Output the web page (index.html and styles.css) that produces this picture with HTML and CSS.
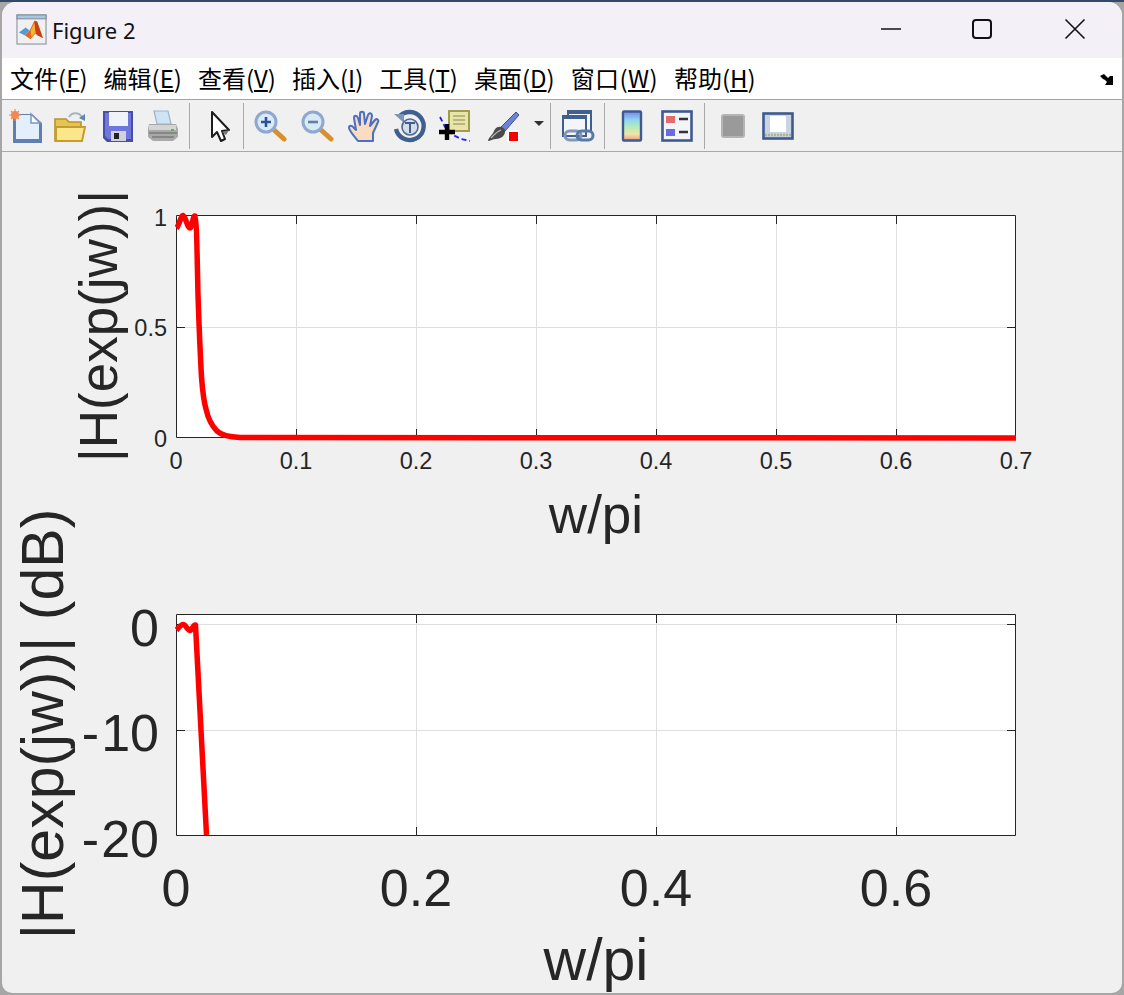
FILE: index.html
```html
<!DOCTYPE html>
<html lang="en">
<head>
    <meta charset="UTF-8">
    <title>Figure 2</title>
    <link rel="stylesheet" href="styles.css">
</head>
<body>
    <div class="window">
        <div class="titlebar">
            <svg class="app-icon" viewBox="0 0 32 32">
                <rect x="1" y="1" width="30" height="30" fill="#f0f0f0" stroke="#8f9aa3" stroke-width="1.2"/>
                <rect x="1" y="1" width="30" height="4" fill="#a9c6e0" stroke="#7c8a96" stroke-width="1"/>
                <path d="M3 19 L10 14 L14 17 L9 22 Z" fill="#4f9bd6"/>
                <path d="M9 22 L14 17 L19 7 L22 8 L20 20 L15 26 Z" fill="#e2661f"/>
                <path d="M19 7 L22 8 L28 25 L22 22 L20 20 Z" fill="#c8401a"/>
                <path d="M15 17 L19 9 L20 19 L16 24 Z" fill="#f6b32c"/>
            </svg>
            <span class="title">Figure 2</span>
            <div class="controls">
                <svg class="ctl ctl-min" viewBox="0 0 20 20"><path d="M0 10H20"/></svg>
                <svg class="ctl ctl-max" viewBox="0 0 20 20"><rect x="1" y="1" width="18" height="18" rx="3"/></svg>
                <svg class="ctl ctl-close" viewBox="0 0 20 20"><path d="M0.5 0.5L19.5 19.5M19.5 0.5L0.5 19.5"/></svg>
            </div>
        </div>

        <div class="menubar">
            <span class="menu-item">文件(<u>F</u>)</span>
            <span class="menu-item">编辑(<u>E</u>)</span>
            <span class="menu-item">查看(<u>V</u>)</span>
            <span class="menu-item">插入(<u>I</u>)</span>
            <span class="menu-item">工具(<u>T</u>)</span>
            <span class="menu-item">桌面(<u>D</u>)</span>
            <span class="menu-item wide">窗口(<u>W</u>)</span>
            <span class="menu-item">帮助(<u>H</u>)</span>
            <svg class="dock-arrow" viewBox="0 0 16 14"><path d="M1 3 L5 1 L9 5 L11 3 L14 3 L14 12 L6 12 L8 9 L6 7 L4 6 Z" fill="#000"/></svg>
        </div>

        <div class="toolbar">
            <!-- new -->
            <svg class="tool" viewBox="0 0 32 32">
                <path d="M3 4H22L32 13V33H3Z" fill="#5f7fb2"/>
                <path d="M6 5H21L29 13V29H6Z" fill="#e3effa"/>
                <path d="M21 4V13H30Z" fill="#ffffff" stroke="#7e97c0" stroke-width="1.5"/>
                <circle cx="5" cy="5" r="4" fill="#ee8a52"/>
                <path d="M5 -1V11M-1 5H11M1 1L9 9M9 1L1 9" stroke="#ee8a52" stroke-width="1.2"/>
            </svg>
            <!-- open -->
            <svg class="tool" viewBox="0 0 32 32">
                <path d="M1 9H12L15 12H27V31H1Z" fill="#e6c452" stroke="#b8922c" stroke-width="1.6"/>
                <path d="M2 17H31L28 31H2Z" fill="#fbe68a" stroke="#c49c30" stroke-width="2"/>
                <path d="M15 7C18 2 25 2 28 7" fill="none" stroke="#a3b3c6" stroke-width="2"/>
                <path d="M25 8L31 4V11Z" fill="#5f84ad"/>
            </svg>
            <!-- save -->
            <svg class="tool" viewBox="0 0 32 32">
                <path d="M1 1H31V32H5L1 28Z" fill="#464fa8"/>
                <path d="M3 3H29V29H6L3 26Z" fill="#7076dc"/>
                <rect x="7" y="2" width="19" height="14" fill="#f0f2fa"/>
                <rect x="9" y="21" width="15" height="10" fill="#d0d2e2"/>
                <rect x="12" y="23" width="5" height="6" fill="#222"/>
            </svg>
            <!-- print -->
            <svg class="tool" viewBox="0 0 32 32">
                <path d="M7 1H21L24 14H10Z" fill="#cfe3f6" stroke="#9fb3c8" stroke-width="1.2"/>
                <path d="M2 14H29L31 19V27L26 31H6L1 27V19Z" fill="#a9a9a9"/>
                <path d="M2 15H29V20H2Z" fill="#d4d4d4"/>
                <path d="M2 23H30M5 27H27" stroke="#7b7b7b" stroke-width="1.6"/>
                <rect x="24" y="19" width="3" height="2" fill="#5bb25b"/>
            </svg>
            <div class="sep"></div>
            <!-- pointer -->
            <svg class="tool" viewBox="0 0 32 32">
                <path d="M8 2V27L13 22L17 31L21 29L18 21L25 20Z" fill="#fff" stroke="#1c1c1c" stroke-width="2" stroke-linejoin="round"/>
                <path d="M18 22L25 20L22 25" fill="#777"/>
            </svg>
            <div class="sep"></div>
            <!-- zoom in -->
            <svg class="tool" viewBox="0 0 32 32">
                <path d="M19 19L30 29" stroke="#d98f2d" stroke-width="5" stroke-linecap="round"/>
                <circle cx="12" cy="12" r="10" fill="#d8eaf6" stroke="#8fa8d0" stroke-width="3"/>
                <path d="M7 12H17M12 7V17" stroke="#2f4f9f" stroke-width="2.6"/>
            </svg>
            <!-- zoom out -->
            <svg class="tool" viewBox="0 0 32 32">
                <path d="M19 19L30 29" stroke="#d98f2d" stroke-width="5" stroke-linecap="round"/>
                <circle cx="12" cy="12" r="10" fill="#d8eaf6" stroke="#8fa8d0" stroke-width="3"/>
                <path d="M7 12H17" stroke="#5f7fa9" stroke-width="2.6"/>
            </svg>
            <!-- pan -->
            <svg class="tool" viewBox="0 0 32 32">
                <path d="M10 31C7 27 2 22 1 18C1 15 4 15 6 18L8 20L6 8C6 5 9 5 10 8L12 15L12 4C12 1 16 1 16 4L17 14L20 5C21 2 24 3 24 6L22 16L27 10C29 8 31 10 30 12L25 23V31Z" fill="#fbdcc0" stroke="#4a6fc4" stroke-width="2" stroke-linejoin="round"/>
            </svg>
            <!-- rotate -->
            <svg class="tool" viewBox="0 0 32 32">
                <path d="M6 7A14 14 0 1 1 3 19" fill="none" stroke="#3f5f8f" stroke-width="4.4"/>
                <path d="M1 4H11V13Z" fill="#7f95b8"/>
                <circle cx="17" cy="17" r="8" fill="#d8dee8" stroke="#4c6a96" stroke-width="1.6"/>
                <path d="M12 13H22M17 13V23" stroke="#3f5f8f" stroke-width="2"/>
            </svg>
            <!-- data cursor -->
            <svg class="tool" viewBox="0 0 32 32">
                <rect x="10" y="1" width="20" height="20" fill="#e8e6a6" stroke="#a09c4c" stroke-width="2"/>
                <path d="M14 6H26M14 10H26M14 14H26" stroke="#a9a675" stroke-width="1.5"/>
                <path d="M1 7L6 17L14 25L22 29L31 31" fill="none" stroke="#2222ee" stroke-width="1.8" stroke-dasharray="5 3"/>
                <path d="M0 22H16M8 14V30" stroke="#000" stroke-width="4.4"/>
            </svg>
            <div class="brush-cell">
                <!-- brush -->
                <svg class="tool" viewBox="0 0 32 32">
                    <path d="M14 17L29 2L32 5L18 21Z" fill="#6b82d6" stroke="#40508f" stroke-width="1"/>
                    <path d="M1 31C2 26 6 25 7 21C9 16 15 15 18 20C19 25 14 29 9 29C6 29 3 31 1 31Z" fill="#4a4a4a"/>
                    <path d="M4 28C6 26 9 22 14 20" stroke="#b5b5b5" stroke-width="1.2" fill="none"/>
                    <rect x="20" y="20" width="12" height="12" fill="#fff"/>
                    <rect x="22" y="22" width="9" height="9" fill="#f50000"/>
                </svg>
                <span class="drop-arrow"></span>
            </div>
            <div class="sep"></div>
            <!-- link -->
            <svg class="tool" viewBox="0 0 32 32">
                <rect x="6" y="1" width="23" height="20" fill="#f3f5f8" stroke="#3f5f8f" stroke-width="2"/>
                <rect x="6" y="1" width="23" height="3" fill="#3f5f8f"/>
                <rect x="1" y="6" width="23" height="20" fill="#f3f5f8" stroke="#3f5f8f" stroke-width="2"/>
                <rect x="1" y="6" width="23" height="3" fill="#3f5f8f"/>
                <rect x="3" y="21" width="16" height="9" rx="4.500" fill="none" stroke="#8298b8" stroke-width="3"/>
                <rect x="15" y="21" width="16" height="9" rx="4.500" fill="none" stroke="#5a7aa6" stroke-width="3"/>
            </svg>
            <div class="sep"></div>
            <!-- colorbar -->
            <svg class="tool" viewBox="0 0 32 32">
                <defs>
                    <linearGradient id="cbar" x1="0" y1="0" x2="0" y2="1">
                        <stop offset="0" stop-color="#7a86ee"/>
                        <stop offset=".3" stop-color="#8ed8ee"/>
                        <stop offset=".55" stop-color="#b8ecb8"/>
                        <stop offset=".78" stop-color="#f0e6a8"/>
                        <stop offset="1" stop-color="#ee9a7c"/>
                    </linearGradient>
                </defs>
                <rect x="7" y="1.5" width="18" height="29" rx="1" fill="url(#cbar)" stroke="#3f5a90" stroke-width="2.4"/>
            </svg>
            <!-- legend -->
            <svg class="tool" viewBox="0 0 32 32">
                <rect x="1.5" y="1.5" width="29" height="29" fill="#f2f4f8" stroke="#3f5a90" stroke-width="2.6"/>
                <rect x="5" y="6" width="9" height="7" fill="#e66a6a"/>
                <rect x="5" y="19" width="9" height="7" fill="#6a6ae6"/>
                <path d="M18 9H27M18 22H27" stroke="#333" stroke-width="2.4"/>
            </svg>
            <div class="sep"></div>
            <!-- hide tools -->
            <svg class="tool" viewBox="0 0 32 32">
                <rect x="5" y="5" width="22" height="22" rx="2" fill="#9a9a9a" stroke="#b4b4b4" stroke-width="2"/>
            </svg>
            <!-- show tools -->
            <svg class="tool" viewBox="0 0 32 32">
                <rect x="1.5" y="3.5" width="29" height="25" fill="#c9d3e2" stroke="#3f5a90" stroke-width="2.6"/>
                <rect x="8" y="6" width="16" height="16" fill="#fff"/>
                <path d="M3 25H29" stroke="#b0b48a" stroke-width="2.500" stroke-dasharray="2 1"/>
            </svg>
        </div>

        <div class="figure">
            <svg class="plots" viewBox="2 152 1120 841">
                <!-- top axes -->
                <rect class="plot-bg" x="176.5" y="215.5" width="839" height="222"/>
                <path class="grid" d="M296.500 215.500V437.500M416.500 215.500V437.500M536.500 215.500V437.500M656.500 215.500V437.500M776.500 215.500V437.500M896.500 215.500V437.500M176.500 327.500H1015.500"/>
                <path class="axis" d="M176.500 215.500H1015.500V437.500H176.500Z"/>
                <path class="axis" d="M176.500 327.500H185M1015.500 327.500H1007M296.500 437.500V429M416.500 437.500V429M536.500 437.500V429M656.500 437.500V429M776.500 437.500V429M896.500 437.500V429M296.500 215.500V224M416.500 215.500V224M536.500 215.500V224M656.500 215.500V224M776.500 215.500V224M896.500 215.500V224"/>
                <path class="curve" d="M176.500 228 C179 226 181 215 183 215.500 C185.500 216 187.500 228 190 228 C192 228 193 215 195 216 C196.500 217 197 250 198 295 C199 325 200 350 201.500 377 C202.500 390 204 402 206 409 C208 418 211 425 217 431 C221 435 228 437 240 437.500 C255 438 300 438 1016 438"/>
                <text class="tick-sm end" x="167" y="226">1</text>
                <text class="tick-sm end" x="167" y="336">0.5</text>
                <text class="tick-sm end" x="167" y="447">0</text>
                <text class="tick-sm" x="176" y="469">0</text>
                <text class="tick-sm" x="296" y="469">0.1</text>
                <text class="tick-sm" x="416" y="469">0.2</text>
                <text class="tick-sm" x="536" y="469">0.3</text>
                <text class="tick-sm" x="656" y="469">0.4</text>
                <text class="tick-sm" x="776" y="469">0.5</text>
                <text class="tick-sm" x="896" y="469">0.6</text>
                <text class="tick-sm" x="1016" y="469">0.7</text>
                <text class="label" x="596" y="533">w/pi</text>
                <text class="label" transform="translate(117 326) rotate(-90)">|H(exp(jw))|</text>

                <!-- bottom axes -->
                <rect class="plot-bg" x="176.5" y="614.5" width="839" height="221"/>
                <path class="grid" d="M416.500 614.500V835.500M656.500 614.500V835.500M896.500 614.500V835.500M176.500 624.500H1015.500M176.500 730.500H1015.500"/>
                <path class="axis" d="M176.500 614.500H1015.500V835.500H176.500Z"/>
                <path class="axis" d="M176.500 624.500H185M1015.500 624.500H1007M176.500 730.500H185M1015.500 730.500H1007M416.500 835.500V827M656.500 835.500V827M896.500 835.500V827M416.500 614.500V623M656.500 614.500V623M896.500 614.500V623"/>
                <path class="curve" d="M176.500 630 C179 628 181 624 183.500 624.500 C186 625 187.500 630.500 190 630.500 C192 630.500 193.500 624 195.500 625 L206.500 835"/>
                <text class="tick-lg end" x="159" y="646">0</text>
                <text class="tick-lg end" x="159" y="751"><tspan class="dash">-</tspan>10</text>
                <text class="tick-lg end" x="159" y="857"><tspan class="dash">-</tspan>20</text>
                <text class="tick-lg" x="176" y="906">0</text>
                <text class="tick-lg" x="416" y="906">0.2</text>
                <text class="tick-lg" x="656" y="906">0.4</text>
                <text class="tick-lg" x="896" y="906">0.6</text>
                <text class="label-lg" x="596" y="980">w/pi</text>
                <text class="label-lg" transform="translate(63 724) rotate(-90)">|H(exp(jw))| (dB)</text>
            </svg>
        </div>
    </div>
</body>
</html>
```

FILE: styles.css
```css
html {
    background-color: #a6a6a6;
    background-image: linear-gradient(#33496a, #33496a);
    background-repeat: no-repeat;
    background-size: 100% 2px;
}
body {
    margin: 0;
    padding: 2px;
    height: 995px;
    box-sizing: border-box;
    overflow: hidden;
    font-family: "Noto Sans", sans-serif;
}
.window {
    width: 1120px;
    height: 991px;
    display: flex;
    flex-direction: column;
    background-color: #f0f0f0;
    border-radius: 14px 14px 10px 10px;
    overflow: hidden;
}
.titlebar {
    height: 56px;
    flex: none;
    display: flex;
    align-items: center;
    padding-left: 14px;
    background-color: #f3f0f8;
}
.app-icon {
    width: 31px;
    height: 31px;
    margin-right: 5px;
    margin-bottom: 2px;
}
.title {
    font-size: 22px;
    color: #111111;
}
.controls {
    margin-left: auto;
    display: flex;
    align-items: center;
    gap: 71px;
    padding-right: 37px;
    padding-bottom: 2px;
}
.ctl {
    width: 20px;
    height: 20px;
    fill: none;
    stroke: #111111;
    stroke-width: 1.6;
    overflow: visible;
}
.ctl-max {
    stroke-width: 2;
    margin-right: 2px;
}
.menubar {
    height: 42px;
    flex: none;
    box-sizing: border-box;
    display: flex;
    align-items: center;
    gap: 16px;
    padding-left: 8px;
    padding-right: 7px;
    padding-bottom: 2px;
    background-color: #ffffff;
    border-bottom: 1px solid #a3a3a3;
    font-family: "Noto Sans CJK SC", sans-serif;
    font-size: 24px;
    color: #000000;
}
.menu-item {
    white-space: nowrap;
}
.wide {
    letter-spacing: 0.4px;
}
.dock-arrow {
    width: 16px;
    height: 14px;
    margin-left: auto;
    margin-top: 4px;
}
.toolbar {
    height: 52px;
    flex: none;
    box-sizing: border-box;
    display: grid;
    grid-template-columns: 48px 40px 56px 34px 18px 44px 2px 52px 42px 52px 38px 54px 66px 4px 51px 2px 54px 36px 18px 40px 50px;
    justify-items: center;
    align-items: center;
    background-color: #f0f0f0;
    border-bottom: 1px solid #a8a8a8;
}
.tool {
    width: 32px;
    height: 32px;
    filter: blur(0.6px);
    overflow: visible;
}
.sep {
    width: 1px;
    height: 46px;
    background-color: #a8a8a8;
}
.brush-cell {
    justify-self: start;
    display: flex;
    align-items: center;
    padding-left: 5px;
}
.drop-arrow {
    width: 0;
    height: 0;
    margin-left: 15px;
    margin-bottom: 4px;
    border-left: 5px solid transparent;
    border-right: 5px solid transparent;
    border-top: 5px solid #333333;
}
.figure {
    flex: 1;
    min-height: 0;
}
.plots {
    display: block;
    width: 1120px;
    height: 841px;
}
.plot-bg {
    fill: #ffffff;
}
.grid {
    fill: none;
    stroke: #dedede;
    stroke-width: 1;
}
.axis {
    fill: none;
    stroke: #262626;
    stroke-width: 1;
}
.curve {
    fill: none;
    stroke: #ff0000;
    stroke-width: 5.5;
    stroke-linejoin: round;
}
.plots text {
    font-family: "Liberation Sans", Arial, sans-serif;
    fill: #262626;
    text-anchor: middle;
}
.plots .end {
    text-anchor: end;
}
.tick-sm {
    font-size: 23.5px;
}
.tick-lg {
    font-size: 52px;
}
.dash {
    letter-spacing: 2px;
}
.label {
    font-size: 53px;
}
.label-lg {
    font-size: 59px;
}
```
